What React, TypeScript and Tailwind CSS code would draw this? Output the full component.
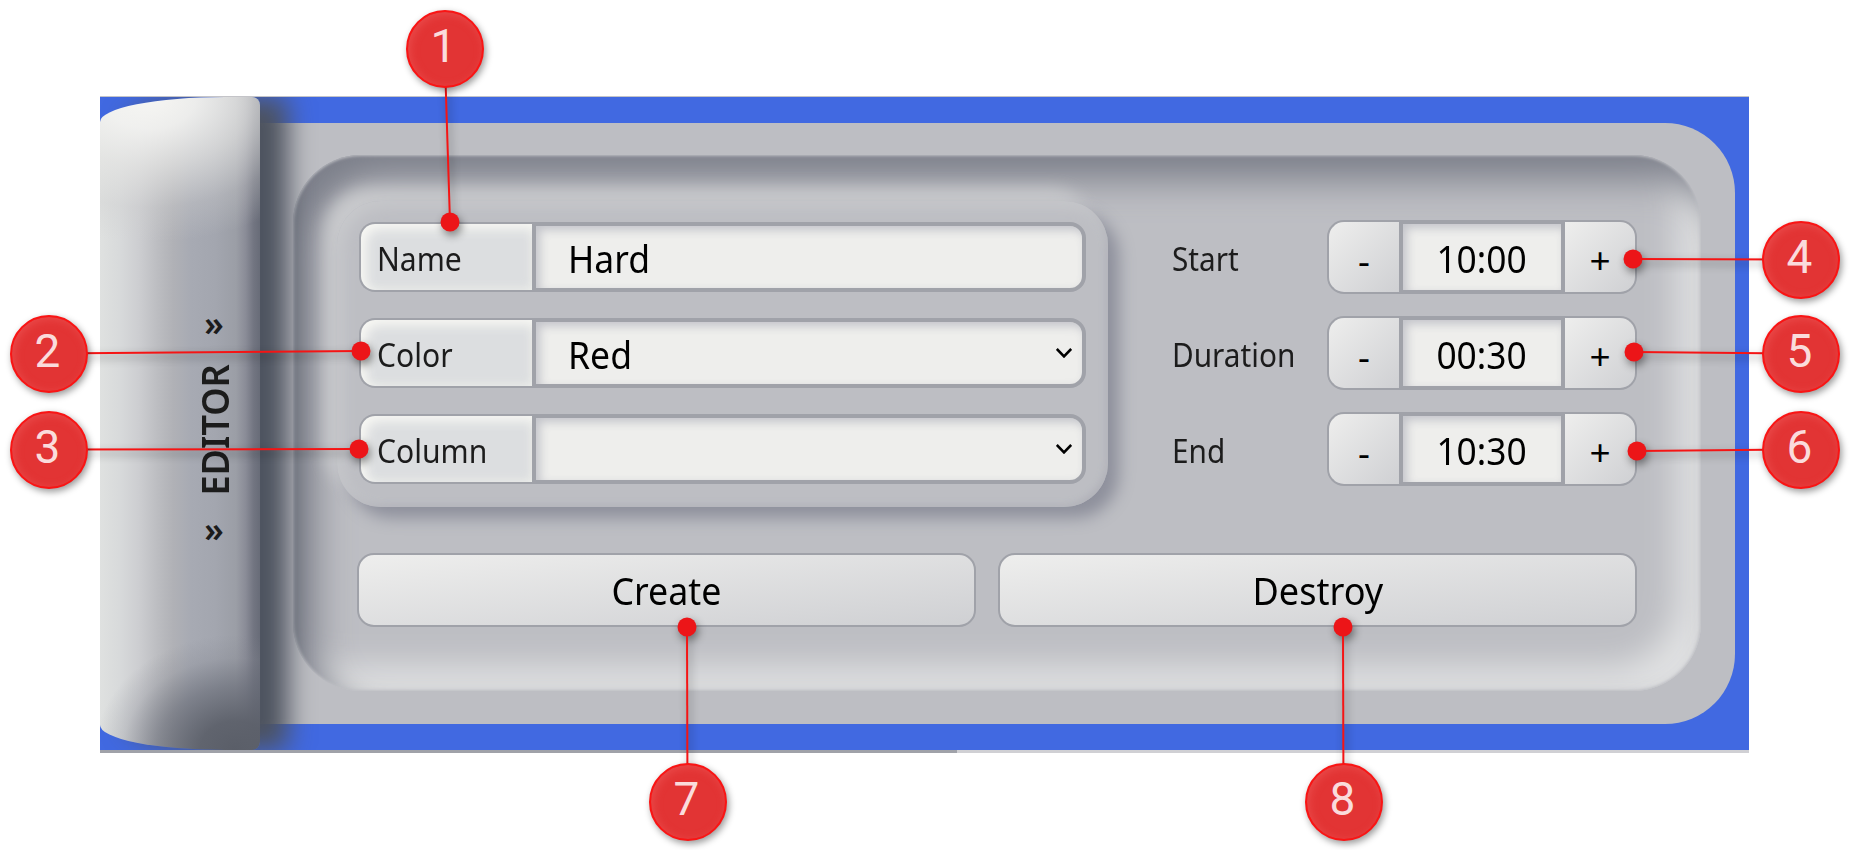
import React from "react";

const edge = "border-[#a0a2a9]";

function Field({ label, value, select }: { label: string; value: string; select?: boolean }) {
  return (
    <div className="flex h-[70px] w-[727px]">
      <div
        className={`flex w-[173px] items-center rounded-l-[16px] border-2 border-r-0 ${edge} bg-[#dcdee0] pl-[16px] pt-[4px] text-[32px] leading-none text-[#1c1c1c] shadow-[inset_5px_5px_12px_#f8f8f4,inset_-2px_-3px_8px_#e4e6e4]`}
      >
        <span className="inline-block origin-left scale-x-[0.94]">{label}</span>
      </div>
      <div
        className={`flex flex-1 items-center justify-between rounded-r-[16px] border-4 ${edge} bg-[#eeeeec] pl-[32px] pr-[10px] text-[38px] leading-none text-black shadow-[inset_4px_4px_10px_#c3c4ca]`}
      >
        <span className="inline-block origin-left scale-x-[0.935] pt-[2px]">{value}</span>
        {select && (
          <svg width="16" height="10" viewBox="0 0 16 10" fill="none" stroke="#000" strokeWidth="2.6">
            <path d="M0.8 1 L8 8.4 L15.2 1" />
          </svg>
        )}
      </div>
    </div>
  );
}

const stepButton = "w-[72px] border-2 bg-linear-to-br from-[#eeeeed] to-[#cfd0d3] pt-[5px] text-[37px] leading-none";

function TimeRow({ label, value }: { label: string; value: string }) {
  return (
    <div className="flex h-[74px] items-center justify-between">
      <span className="inline-block origin-left scale-x-[0.93] pt-[4px] text-[32px] leading-none text-[#1c1c1c]">{label}</span>
      <div className="flex h-[74px] w-[310px] text-black">
        <button className={`${stepButton} rounded-l-[17px] border-r-0 ${edge}`}>-</button>
        <div className={`flex w-[166px] items-center justify-center border-4 ${edge} bg-[#eeeeec] pt-[2px] text-[38px] leading-none shadow-[inset_4px_4px_10px_#c3c4ca]`}>
          <span className="inline-block scale-x-[0.93]">{value}</span>
        </div>
        <button className={`${stepButton} rounded-r-[17px] border-l-0 ${edge}`}>+</button>
      </div>
    </div>
  );
}

type Mark = { n: number; x: number; y: number; tx: number; ty: number };

const marks: Mark[] = [
  { n: 1, x: 444.5, y: 48.5, tx: 450, ty: 222 },
  { n: 2, x: 48.5, y: 353.5, tx: 361, ty: 351 },
  { n: 3, x: 48.5, y: 449.5, tx: 359, ty: 449 },
  { n: 4, x: 1800.5, y: 259.5, tx: 1633, ty: 259 },
  { n: 5, x: 1800.5, y: 353.5, tx: 1634, ty: 352 },
  { n: 6, x: 1800.5, y: 449.5, tx: 1637, ty: 451 },
  { n: 7, x: 687.5, y: 801.5, tx: 687, ty: 627 },
  { n: 8, x: 1343.5, y: 801.5, tx: 1343, ty: 627 },
];

function Callouts() {
  return (
    <div className="pointer-events-none absolute inset-0 z-20">
      <svg width="1850" height="850" className="absolute inset-0 [filter:drop-shadow(2px_4px_4px_rgba(0,0,0,0.45))]">
        {marks.map((m) => (
          <g key={m.n}>
            <line x1={m.x} y1={m.y} x2={m.tx} y2={m.ty} stroke="#f51414" strokeWidth="2" />
            <circle cx={m.tx} cy={m.ty} r="9.5" fill="#ec1518" />
          </g>
        ))}
      </svg>
      {marks.map((m) => (
        <div
          key={m.n}
          className="absolute flex size-[78px] -translate-x-1/2 -translate-y-1/2 items-center justify-center rounded-full border-2 border-[#fa1414] bg-[#e23434] pb-[5px] pr-[2px] font-['Roboto','Noto_Sans',sans-serif] text-[46px] leading-none text-[#fadcdc] shadow-[2px_3px_7px_rgba(0,0,0,0.4),inset_2px_2px_8px_#ea4a4a]"
          style={{ left: m.x, top: m.y }}
        >
          {m.n}
        </div>
      ))}
    </div>
  );
}

export default function App() {
  return (
    <div className="relative h-[850px] w-[1850px] overflow-hidden bg-white pl-[100px] pt-24 font-['Noto_Sans','Open_Sans',sans-serif]">
      <div className="h-px w-[1649px] bg-[#c4c4c8]" />
      <div className="flex h-[653px] w-[1649px] items-center overflow-hidden bg-[#4169e1]">
        <div className="relative z-10 h-[653px] w-[160px] shrink-0 rounded-[125px_8px_8px_125px/25px_8px_8px_25px] bg-[radial-gradient(210px_145px_at_50px_0px,#f6f6f3_0%,#f3f3f1e8_22%,#e6e6e4b0_48%,#d0d0d050_76%,#c0c0c000_100%),radial-gradient(140px_115px_at_135px_100%,#5a5e68_0%,#5c606af0_25%,#666a75a0_55%,#80838d40_80%,#80838d00_100%),linear-gradient(90deg,#dfe1e0_0%,#d8dadb_12%,#cdced1_24%,#bcbdc1_36%,#b0b1b6_46%,#a7aab3_57%,#a3a6af_72%,#9b9ea6_85%,#8a8c97_91%,#727581_96%,#686c78_100%)] pt-[206px] shadow-[28px_0_26px_#4d535f] text-[#1c1c1c]">
          <div className="flex w-full flex-col items-center pl-[68px]">
            <span className="flex h-10 items-center text-[34px] font-semibold leading-none">»</span>
            <span className="mb-0 mt-[7px] flex h-40 rotate-180 items-center justify-center text-[38px] font-semibold leading-none [writing-mode:vertical-rl]">
              <span className="inline-block scale-y-[0.95]">EDITOR</span>
            </span>
            <span className="-mt-px flex h-10 items-center text-[34px] font-semibold leading-none">»</span>
          </div>
        </div>
        <div className="flex h-[601px] w-[1475px] items-center rounded-r-[70px] bg-[#bdbec3] pl-[33px]">
          <div className="-mt-px flex h-[536px] w-[1408px] flex-col rounded-[68px] pl-[41px] pr-[64px] pt-[43px] shadow-[inset_0_0_3px_1px_#bdbec3,inset_22px_24px_36px_#7c7f8a,inset_-25px_-25px_32px_#e0e1e2]">
            <div className="flex">
              <div className="flex h-[312px] w-[776px] flex-col pb-[3px] pl-[3px] pr-[2px] pt-[3px]">
                <div className="flex flex-1 flex-col gap-[26px] rounded-[44px] bg-[#bdbec3] pl-[22px] pt-[21px] shadow-[11px_11px_16px_#8e909c,-13px_-13px_16px_-1px_#c8c9cc,inset_5px_5px_16px_#c9cacd,inset_-2px_-2px_7px_#aaabb3]">
                  <Field label="Name" value="Hard" />
                  <Field label="Color" value="Red" select />
                  <Field label="Column" value="" select />
                </div>
              </div>
              <div className="flex flex-1 flex-col gap-[22px] pl-[62px] pt-[22px]">
                <TimeRow label="Start" value="10:00" />
                <TimeRow label="Duration" value="00:30" />
                <TimeRow label="End" value="10:30" />
              </div>
            </div>
            <div className="mt-[43px] flex gap-[22px] pl-[23px]">
              <button className={`h-[74px] w-[619px] rounded-[17px] border-2 ${edge} bg-linear-to-br from-[#eeeeed] to-[#cfd0d3] text-[38px] leading-none text-black`}>
                <span className="inline-block scale-x-[0.94]">Create</span>
              </button>
              <button className={`h-[74px] flex-1 rounded-[17px] border-2 ${edge} bg-linear-to-br from-[#eeeeed] to-[#cfd0d3] text-[38px] leading-none text-black`}>
                <span className="inline-block scale-x-[0.95]">Destroy</span>
              </button>
            </div>
          </div>
        </div>
      </div>
      <div className="flex h-[3px] w-[1649px]">
        <div className="w-[857px] bg-[#a0a2a9]" />
        <div className="flex-1 bg-[#d0d0d4]" />
      </div>
      <Callouts />
    </div>
  );
}
